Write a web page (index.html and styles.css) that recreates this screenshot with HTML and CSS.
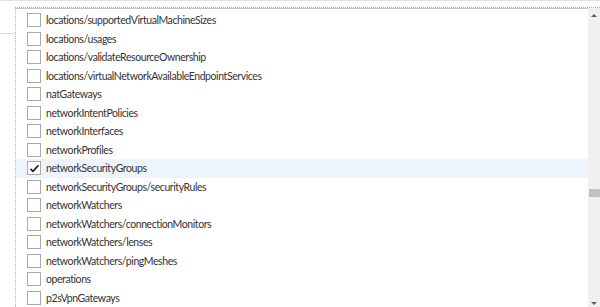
FILE: index.html
```html
<!DOCTYPE html>
<html>
<head>
    <title>Resource types</title>
    <link rel="stylesheet" href="styles.css">
</head>
<body>
<div class="topbar"></div>
<div class="main">
    <div class="gutter"><div class="gutter-line"></div></div>
    <div class="panel">
        <ul class="list">
            <li class="row"><span class="box"></span>locations/supportedVirtualMachineSizes</li>
            <li class="row"><span class="box"></span>locations/usages</li>
            <li class="row"><span class="box"></span>locations/validateResourceOwnership</li>
            <li class="row"><span class="box"></span>locations/virtualNetworkAvailableEndpointServices</li>
            <li class="row"><span class="box"></span>natGateways</li>
            <li class="row"><span class="box"></span>networkIntentPolicies</li>
            <li class="row"><span class="box"></span>networkInterfaces</li>
            <li class="row"><span class="box"></span>networkProfiles</li>
            <li class="row selected"><span class="box"><svg width="13" height="13" viewBox="0 0 13 13"><path d="M2.5 6.8 L5 9.3 L10.5 3.3" fill="none" stroke="#1a1a1a" stroke-width="1.7"/></svg></span>networkSecurityGroups</li>
            <li class="row"><span class="box"></span>networkSecurityGroups/securityRules</li>
            <li class="row"><span class="box"></span>networkWatchers</li>
            <li class="row"><span class="box"></span>networkWatchers/connectionMonitors</li>
            <li class="row"><span class="box"></span>networkWatchers/lenses</li>
            <li class="row"><span class="box"></span>networkWatchers/pingMeshes</li>
            <li class="row"><span class="box"></span>operations</li>
            <li class="row"><span class="box"></span>p2sVpnGateways</li>
        </ul>
        <div class="scrollbar">
            <span class="arrow up"></span>
            <div class="track"><div class="thumb"></div></div>
            <span class="arrow down"></span>
        </div>
    </div>
</div>
</body>
</html>
```

FILE: styles.css
```css
html, body {
    margin: 0;
    height: 100%;
    overflow: hidden;
}
body {
    font-family: Lato, "Open Sans", sans-serif;
    font-size: 10.5px;
    letter-spacing: -0.42px;
    color: #333333;
    background-color: #ffffff;
    display: flex;
    flex-direction: column;
}
.topbar {
    height: 6px;
    border-top: 1px solid #e2e2e2;
    flex: none;
}
.main {
    flex: 1;
    display: flex;
    min-height: 0;
}
.gutter {
    width: 15px;
    flex: none;
}
.gutter-line {
    height: 26px;
    border-bottom: 1px solid #e0e0e0;
}
.panel {
    flex: 1;
    display: flex;
    border-top: 1px dotted #7ec3d6;
    border-left: 1px dotted #7ec3d6;
    box-shadow: inset 0 1px 0 #c8c8c8;
    min-height: 0;
}
.list {
    flex: 1;
    list-style: none;
    margin: 0;
    padding: 3px 0 0 0;
}
.row {
    height: 18.5px;
    display: flex;
    align-items: center;
    padding-left: 11px;
    white-space: nowrap;
}
.row.selected {
    background-color: #ecf5fe;
}
.box {
    width: 12px;
    height: 12px;
    border: 1px solid #a9a9a9;
    background-color: #ffffff;
    margin-right: 5px;
    flex: none;
    position: relative;
}
.box svg {
    position: absolute;
    left: -0.5px;
    top: -0.5px;
}
.scrollbar {
    width: 12px;
    flex: none;
    background-color: #f0f0f0;
    display: flex;
    flex-direction: column;
    align-items: center;
}
.arrow {
    width: 0;
    height: 0;
    border-left: 3px solid transparent;
    border-right: 3px solid transparent;
    flex: none;
}
.arrow.up {
    margin-top: 6px;
    border-bottom: 3px solid #606060;
}
.arrow.down {
    margin-bottom: 2px;
    border-top: 3px solid #606060;
}
.track {
    flex: 1;
    width: 100%;
    padding-top: 172px;
}
.thumb {
    height: 8px;
    margin-left: 1px;
    background-color: #c2c2c2;
}
```
